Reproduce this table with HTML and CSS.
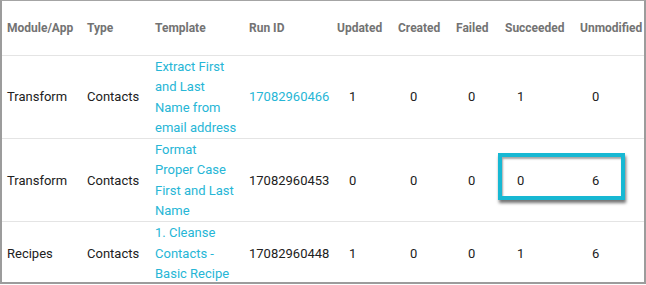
FILE: index.html
```html
<!DOCTYPE html>
<html lang="en">
<head>
    <meta charset="UTF-8">
    <title>Run History</title>
    <link rel="stylesheet" href="styles.css">
</head>
<body>
    <div class="frame">
        <table class="runs">
            <colgroup>
                <col class="c-module">
                <col class="c-type">
                <col class="c-template">
                <col class="c-run">
                <col class="c-updated">
                <col class="c-created">
                <col class="c-failed">
                <col class="c-succeeded">
                <col class="c-unmodified">
            </colgroup>
            <thead>
                <tr>
                    <th>Module/App</th>
                    <th>Type</th>
                    <th>Template</th>
                    <th>Run ID</th>
                    <th>Updated</th>
                    <th>Created</th>
                    <th>Failed</th>
                    <th>Succeeded</th>
                    <th>Unmodified</th>
                </tr>
            </thead>
            <tbody>
                <tr>
                    <td>Transform</td>
                    <td>Contacts</td>
                    <td><a href="#">Extract First and Last Name from email address</a></td>
                    <td><a href="#">17082960466</a></td>
                    <td class="num">1</td>
                    <td class="num">0</td>
                    <td class="num">0</td>
                    <td class="num">1</td>
                    <td class="num">0</td>
                </tr>
                <tr>
                    <td>Transform</td>
                    <td>Contacts</td>
                    <td><a href="#">Format <span class="keep">Proper Case</span> First and Last Name</a></td>
                    <td>17082960453</td>
                    <td class="num">0</td>
                    <td class="num">0</td>
                    <td class="num">0</td>
                    <td class="num">0</td>
                    <td class="num">6</td>
                </tr>
                <tr>
                    <td>Recipes</td>
                    <td>Contacts</td>
                    <td><a href="#">1. Cleanse Contacts - Basic Recipe</a></td>
                    <td>17082960448</td>
                    <td class="num">1</td>
                    <td class="num">0</td>
                    <td class="num">0</td>
                    <td class="num">1</td>
                    <td class="num">6</td>
                </tr>
            </tbody>
        </table>
        <!-- callout around the Succeeded / Unmodified values of row 2 -->
        <div class="callout"></div>
    </div>
</body>
</html>
```

FILE: styles.css
```css
body {
    margin: 0;
    background-color: #ffffff;
    font-family: 'Roboto', 'Liberation Sans', sans-serif;
    color: #212121;
}

.frame {
    position: relative;
    width: 646px;
    height: 284px;
    box-sizing: border-box;
    border-top: 1px solid #a4a4a4;
    border-left: 2px solid #9c9c9c;
    border-right: 2px solid #9c9c9c;
    border-bottom: 2px solid #9c9c9c;
    overflow: hidden;
}

.runs {
    width: 642px;
    table-layout: fixed;
    border-collapse: collapse;
    font-size: 13px;
}

.c-module { width: 80px; }
.c-type { width: 68px; }
.c-template { width: 94px; }
.c-run { width: 88px; }
.c-updated { width: 61px; }
.c-created { width: 58px; }
.c-failed { width: 49px; }
.c-succeeded { width: 75px; }
.c-unmodified { width: 69px; }

.runs th {
    height: 54px;
    padding: 0 5px;
    text-align: left;
    white-space: nowrap;
    font-size: 12px;
    font-weight: 700;
    color: #737373;
    border-bottom: 1px solid #e4e4e4;
}

.runs td {
    padding: 1px 5px 0;
    line-height: 20.3px;
    vertical-align: middle;
    text-align: left;
    border-bottom: 1px solid #e4e4e4;
}

.runs tbody tr:last-child td {
    border-bottom: none;
}

.runs td.num {
    padding-left: 17px;
}

.runs a {
    color: #26b6d6;
    text-decoration: none;
}

.keep {
    white-space: nowrap;
}

.callout {
    position: absolute;
    left: 496px;
    top: 152px;
    width: 127px;
    height: 47px;
    box-sizing: border-box;
    border: 4px solid #17b8d3;
    box-shadow: 1px 3px 3px rgba(0, 0, 0, 0.55), inset 1px 2px 2px rgba(0, 0, 0, 0.35);
}
```
